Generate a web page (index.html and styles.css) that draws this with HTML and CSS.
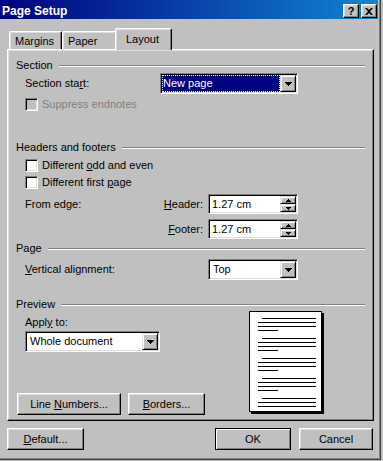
FILE: index.html
```html
<!doctype html>
<html lang="en">
<head>
    <meta charset="utf-8"/>
    <title>Page Setup</title>
    <link rel="stylesheet" href="styles.css">
</head>
<body>
<div class="window">
    <div class="titlebar">
        <span class="title">Page Setup</span>
        <span class="cap-btn help">?</span>
        <span class="cap-btn close">
            <svg width="8" height="7" viewBox="0 0 8 7"><path d="M0 0h2l2 2 2-2h2L5 3.5 8 7H6L4 5 2 7H0l3-3.5z" fill="#000"/></svg>
        </span>
    </div>

    <div class="tabs">
        <div class="tab margins">Margins</div>
        <div class="tab paper">Paper</div>
        <div class="tab active">Layout</div>
    </div>

    <div class="panel">
        <div class="group-title section-title">Section</div>
        <div class="row start-row">
            <span class="label">Section sta<u>r</u>t:</span>
            <div class="combo start-combo">
                <span class="combo-text selected">New page</span>
                <span class="drop"><svg width="7" height="4" viewBox="0 0 7 4"><path d="M0 0h7v1H0zM1 1h5v1H1zM2 2h3v1H2zM3 3h1v1H3z" fill="#000"/></svg></span>
            </div>
        </div>
        <div class="check disabled suppress"><span class="box"></span><span>Suppress endnotes</span></div>

        <div class="group-title hf-title">Headers and footers</div>
        <div class="check odd"><span class="box"></span><span>Different <u>o</u>dd and even</span></div>
        <div class="check first"><span class="box"></span><span>Different first <u>p</u>age</span></div>
        <div class="edge-row header-row">
            <span>From edge:</span>
            <span class="spin-label"><u>H</u>eader:</span>
            <div class="spin">
                <span class="spin-text">1.27 cm</span>
                <span class="spin-btns">
                    <span class="spin-btn"><svg width="5" height="3" viewBox="0 0 5 3"><path d="M2 0h1v1H2zM1 1h3v1H1zM0 2h5v1H0z" fill="#000"/></svg></span>
                    <span class="spin-btn"><svg width="5" height="3" viewBox="0 0 5 3"><path d="M0 0h5v1H0zM1 1h3v1H1zM2 2h1v1H2z" fill="#000"/></svg></span>
                </span>
            </div>
        </div>
        <div class="edge-row footer-row">
            <span></span>
            <span class="spin-label"><u>F</u>ooter:</span>
            <div class="spin">
                <span class="spin-text">1.27 cm</span>
                <span class="spin-btns">
                    <span class="spin-btn"><svg width="5" height="3" viewBox="0 0 5 3"><path d="M2 0h1v1H2zM1 1h3v1H1zM0 2h5v1H0z" fill="#000"/></svg></span>
                    <span class="spin-btn"><svg width="5" height="3" viewBox="0 0 5 3"><path d="M0 0h5v1H0zM1 1h3v1H1zM2 2h1v1H2z" fill="#000"/></svg></span>
                </span>
            </div>
        </div>

        <div class="group-title page-title">Page</div>
        <div class="row valign-row">
            <span class="label valign-label"><u>V</u>ertical alignment:</span>
            <div class="combo valign-combo">
                <span class="combo-text">Top</span>
                <span class="drop"><svg width="7" height="4" viewBox="0 0 7 4"><path d="M0 0h7v1H0zM1 1h5v1H1zM2 2h3v1H2zM3 3h1v1H3z" fill="#000"/></svg></span>
            </div>
        </div>

        <div class="group-title preview-title">Preview</div>
        <div class="preview">
            <div class="preview-left">
                <div class="apply-label">Appl<u>y</u> to:</div>
                <div class="combo apply-combo">
                    <span class="combo-text">Whole document</span>
                    <span class="drop"><svg width="7" height="4" viewBox="0 0 7 4"><path d="M0 0h7v1H0zM1 1h5v1H1zM2 2h3v1H2zM3 3h1v1H3z" fill="#000"/></svg></span>
                </div>
                <div class="panel-buttons">
                    <div class="btn line-numbers"><span>Line <u>N</u>umbers...</span></div>
                    <div class="btn borders"><span><u>B</u>orders...</span></div>
                </div>
            </div>
            <svg class="page-preview" width="75" height="103" viewBox="0 0 75 103" shape-rendering="crispEdges">
                <rect x="2" y="2" width="73" height="101" fill="#000"/>
                <rect x="0.5" y="0.5" width="72" height="100" fill="#fff" stroke="#000"/>
                <g fill="#000">
                    <rect x="13" y="7" width="54" height="1"/>
                    <rect x="9" y="11" width="58" height="1"/>
                    <rect x="9" y="15" width="58" height="1"/>
                    <rect x="9" y="19" width="20" height="1"/>

                    <rect x="13" y="27" width="54" height="1"/>
                    <rect x="9" y="31" width="58" height="1"/>
                    <rect x="9" y="35" width="58" height="1"/>
                    <rect x="9" y="39" width="20" height="1"/>

                    <rect x="13" y="47" width="54" height="1"/>
                    <rect x="9" y="51" width="58" height="1"/>
                    <rect x="9" y="55" width="58" height="1"/>
                    <rect x="9" y="59" width="20" height="1"/>

                    <rect x="13" y="67" width="54" height="1"/>
                    <rect x="9" y="71" width="58" height="1"/>
                    <rect x="9" y="75" width="58" height="1"/>
                    <rect x="9" y="79" width="20" height="1"/>

                    <rect x="13" y="87" width="54" height="1"/>
                    <rect x="9" y="91" width="58" height="1"/>
                    <rect x="9" y="95" width="58" height="1"/>
                </g>
            </svg>
        </div>
    </div>

    <div class="footer">
        <div class="btn default-btn"><span><u>D</u>efault...</span></div>
        <div class="btn ok"><span>OK</span></div>
        <div class="btn cancel"><span>Cancel</span></div>
    </div>
</div>
</body>
</html>
```

FILE: styles.css
```css
html, body {
    margin: 0;
    background: #c0c0c0;
}
body {
    font-family: "Liberation Sans", Arial, sans-serif;
    font-size: 11px;
    line-height: 13px;
    color: #000;
}
u {
    text-decoration: underline;
    text-underline-offset: 1px;
}

.window {
    box-sizing: border-box;
    width: 381px;
    height: 460px;
    background: #c0c0c0;
    border-right: 1px solid #404040;
    border-bottom: 1px solid #404040;
    box-shadow: inset -1px -1px #808080;
}

/* title bar */
.titlebar {
    display: flex;
    align-items: flex-start;
    height: 19px;
    margin-right: 2px;
    padding: 0 1px 0 2px;
    background: linear-gradient(90deg, #000080, #1084d0);
}
.title {
    padding-top: 2px;
    line-height: 18px;
    font-size: 12px;
    font-weight: bold;
    color: #fff;
}
.cap-btn {
    box-sizing: border-box;
    width: 16px;
    height: 14px;
    margin-top: 4px;
    display: flex;
    align-items: center;
    justify-content: center;
    background: #c0c0c0;
    border: 1px solid;
    border-color: #fff #000 #000 #fff;
    box-shadow: inset -1px -1px #808080, inset 1px 1px #dfdfdf;
    font-weight: bold;
    font-size: 11px;
    line-height: 12px;
}
.cap-btn.help {
    margin-left: auto;
}
.cap-btn.close {
    margin-left: 2px;
}

/* tabs */
.tabs {
    display: flex;
    align-items: flex-end;
    height: 21px;
    margin-top: 9px;
    padding-left: 9px;
}
.tab {
    box-sizing: border-box;
    height: 18px;
    padding: 3px 0 0 5px;
    border-top: 1px solid #fff;
    border-left: 1px solid #fff;
    border-right: 1px solid #000;
    border-radius: 2px 2px 0 0;
    box-shadow: inset -1px 0 #808080, inset 1px 1px #dfdfdf;
    background: #c0c0c0;
}
.tab.margins {
    width: 53px;
}
.tab.paper {
    width: 55px;
}
.tab.active {
    position: relative;
    z-index: 1;
    width: 57px;
    height: 22px;
    margin-left: -2px;
    margin-bottom: -1px;
    padding: 4px 0 0 10px;
}

/* tab panel */
.panel {
    box-sizing: border-box;
    width: 367px;
    height: 372px;
    margin-left: 7px;
    border: 1px solid;
    border-color: #fff #000 #000 #fff;
    box-shadow: inset -1px -1px #808080, inset 1px 1px #dfdfdf;
}

.group-title {
    display: flex;
    height: 13px;
    padding: 0 8px;
    white-space: nowrap;
}
.group-title::after {
    content: "";
    flex: 1;
    height: 0;
    margin: 6px 0 0 6px;
    border-top: 1px solid #808080;
    border-bottom: 1px solid #fff;
}
.section-title { margin-top: 9px; }
.hf-title { margin-top: 30px; }
.page-title { margin-top: 3px; }
.preview-title { margin-top: 18px; }

.row {
    display: flex;
    align-items: center;
    padding-left: 17px;
}
.start-row { margin-top: 1px; }
.start-row .label { width: 135px; }
.valign-row { margin-top: 4px; }
.valign-row .label { width: 183px; }

.check {
    display: flex;
    align-items: center;
    height: 13px;
    padding-left: 17px;
    white-space: nowrap;
}
.check .box {
    box-sizing: border-box;
    width: 13px;
    height: 13px;
    margin-right: 4px;
    background: #fff;
    border: 1px solid;
    border-color: #808080 #fff #fff #808080;
    box-shadow: inset 1px 1px #000, inset -1px -1px #dfdfdf;
}
.check.disabled {
    color: #808080;
}
.check.disabled .box {
    background: #c0c0c0;
}
.suppress { margin-top: 4px; }
.odd { margin-top: 5px; }
.first { margin-top: 4px; }

/* combo boxes */
.combo {
    box-sizing: border-box;
    display: flex;
    height: 21px;
    padding: 1px;
    background: #fff;
    border: 1px solid;
    border-color: #808080 #fff #fff #808080;
    box-shadow: inset 1px 1px #000, inset -1px -1px #dfdfdf;
}
.combo-text {
    flex: 1;
    padding-left: 3px;
    line-height: 17px;
    white-space: nowrap;
}
.combo-text.selected {
    padding-left: 1px;
    background: #000080;
    color: #fff;
    outline: 1px dotted #ffff80;
    outline-offset: -1px;
}
.drop {
    box-sizing: border-box;
    width: 16px;
    display: flex;
    align-items: center;
    justify-content: center;
    background: #c0c0c0;
    border: 1px solid;
    border-color: #dfdfdf #000 #000 #dfdfdf;
    box-shadow: inset 1px 1px #fff, inset -1px -1px #808080;
}
.drop svg {
    display: block;
}
.start-combo { width: 138px; }
.valign-combo { width: 90px; }
.apply-combo {
    width: 135px;
    margin: 2px 0 0 8px;
}

/* spinners */
.edge-row {
    display: grid;
    grid-template-columns: 135px 48px 90px;
    align-items: center;
    padding-left: 17px;
    margin-top: 5px;
}
.spin-label {
    padding-right: 5px;
    text-align: right;
}
.spin {
    box-sizing: border-box;
    display: flex;
    height: 20px;
    padding: 1px;
    background: #fff;
    border: 1px solid;
    border-color: #808080 #fff #fff #808080;
    box-shadow: inset 1px 1px #000, inset -1px -1px #dfdfdf;
}
.spin-text {
    flex: 1;
    padding-left: 2px;
    line-height: 16px;
}
.spin-btns {
    display: flex;
    flex-direction: column;
    width: 16px;
}
.spin-btn {
    box-sizing: border-box;
    flex: 1;
    display: flex;
    align-items: center;
    justify-content: center;
    background: #c0c0c0;
    border: 1px solid;
    border-color: #dfdfdf #000 #000 #dfdfdf;
    box-shadow: inset 1px 1px #fff, inset -1px -1px #808080;
}
.spin-btn svg {
    display: block;
}

/* preview */
.preview {
    display: flex;
    height: 104px;
    padding-left: 9px;
}
.preview-left {
    width: 232px;
    display: flex;
    flex-direction: column;
}
.apply-label {
    margin: 5px 0 0 8px;
    height: 13px;
}
.panel-buttons {
    margin-top: auto;
    display: flex;
    gap: 7px;
}
.page-preview {
    display: block;
}

/* buttons */
.btn {
    box-sizing: border-box;
    height: 22px;
    display: flex;
    align-items: center;
    justify-content: center;
    border: 1px solid;
    border-color: #fff #000 #000 #fff;
    box-shadow: inset -1px -1px #808080, inset 1px 1px #dfdfdf;
    white-space: nowrap;
}
.line-numbers { width: 104px; }
.borders { width: 77px; }

.footer {
    display: flex;
    margin-top: 7px;
    padding: 0 7px;
}
.default-btn { width: 77px; }
.ok {
    width: 76px;
    margin-left: auto;
    border-color: #000;
    box-shadow: inset 1px 1px #fff, inset -1px -1px #808080;
}
.cancel {
    width: 74px;
    margin-left: 8px;
}
```
